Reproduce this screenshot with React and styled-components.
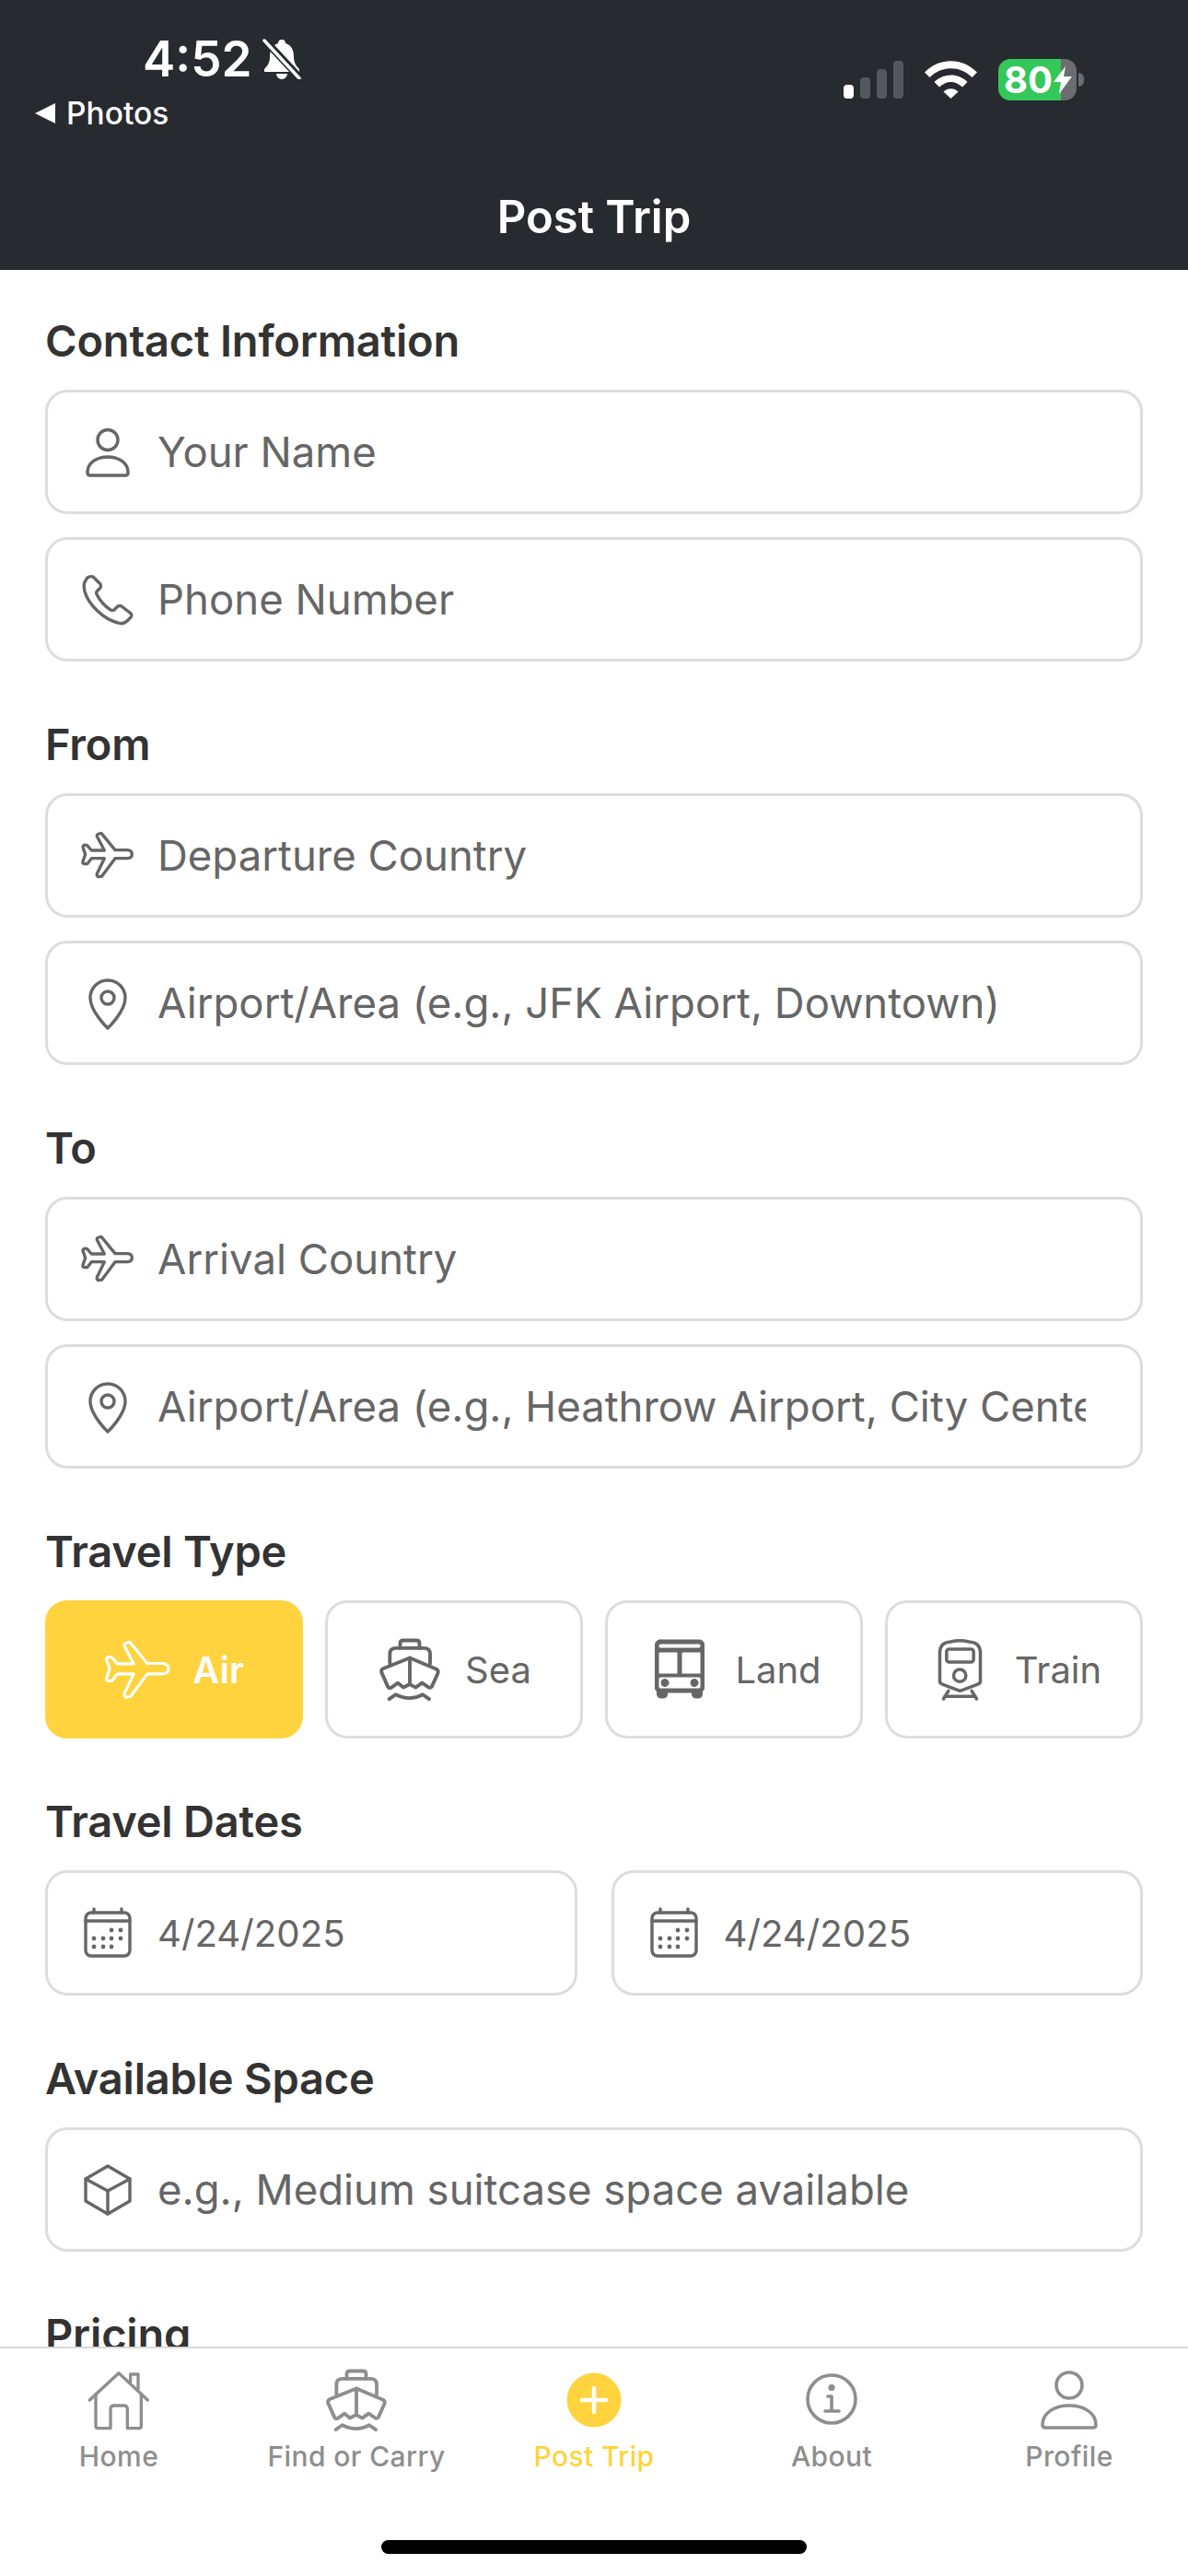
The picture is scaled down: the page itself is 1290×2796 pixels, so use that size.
import styled, { createGlobalStyle } from 'styled-components'

const GlobalStyle = createGlobalStyle`
    html, body {
        margin: 0;
        padding: 0;
        background: #ffffff;
        font-family: Inter, "Noto Sans", sans-serif;
    }
    * {
        box-sizing: border-box;
    }
`

const Screen = styled.div`
    width: 1290px;
    height: 2796px;
    display: flex;
    flex-direction: column;
    overflow: hidden;
    background: #ffffff;
`

const Header = styled.header`
    height: 293px;
    flex-shrink: 0;
    padding: 38px 113px 0 38px;
    background: #272a2f;
    color: #ffffff;
`

const StatusRow = styled.div`
    display: flex;
    justify-content: space-between;
    align-items: flex-start;
`

const TimeRow = styled.div`
    display: flex;
    align-items: center;
    gap: 10px;
    padding-left: 117px;
    height: 52px;
    font-size: 53px;
    font-weight: 600;
    line-height: 52px;
`

const BackLink = styled.div`
    display: flex;
    align-items: center;
    gap: 12px;
    margin-top: 16px;
    height: 34px;
    font-size: 33.5px;
    font-weight: 500;
`

const BackArrow = styled.span`
    width: 0;
    height: 0;
    border-top: 11px solid transparent;
    border-bottom: 11px solid transparent;
    border-right: 22px solid #ffffff;
`

const StatusIcons = styled.div`
    display: flex;
    align-items: center;
    gap: 23px;
    margin-top: 26px;
`

const Signal = styled.div`
    display: flex;
    align-items: flex-end;
    gap: 7px;
    height: 41px;
`

const SignalBar = styled.span`
    width: 11px;
    height: ${({ $height }) => $height}px;
    border-radius: 4px;
    background: ${({ $on }) => ($on ? '#ffffff' : '#54575b')};
`

const Battery = styled.div`
    display: flex;
    align-items: center;
    gap: 1px;
    width: 85px;
    height: 45px;
    padding-left: 6px;
    border-radius: 13px;
    background: linear-gradient(to right, #34c759 80%, #6b6d70 80%);
    font-size: 40px;
    font-weight: 700;
`

const BatteryWrap = styled.div`
    display: flex;
    align-items: center;
    gap: 2px;
`

const BatteryNub = styled.span`
    width: 6px;
    height: 15px;
    border-radius: 0 6px 6px 0;
    background: #6b6d70;
`

const Title = styled.h1`
    margin: 66px -75px 0 0;
    font-size: 49px;
    font-weight: 600;
    line-height: 60px;
    text-align: center;
`

const Form = styled.main`
    flex: 1;
    min-height: 0;
    padding: 50px 49px 0;
    overflow: hidden;
`

const Section = styled.section`
    margin-bottom: 63px;
`

const SectionLabel = styled.h2`
    margin: 0 0 26px;
    font-size: 47px;
    font-weight: 600;
    letter-spacing: -0.2px;
    line-height: 54px;
    color: #333333;
`

const FieldStack = styled.div`
    display: flex;
    flex-direction: column;
    gap: 25px;
`

const DateRow = styled.div`
    display: grid;
    grid-template-columns: repeat(2, 1fr);
    gap: 37px;
`

const Field = styled.div`
    display: flex;
    align-items: center;
    gap: 21px;
    height: ${({ $date }) => ($date ? '136px' : '135px')};
    padding: 0 59px 0 32px;
    border: 3px solid #dddddd;
    border-radius: 24px;
    overflow: hidden;
`

const FieldText = styled.span`
    flex: 1;
    min-width: 0;
    overflow: hidden;
    white-space: nowrap;
    font-size: ${({ $date }) => ($date ? '40.2px' : '45.5px')};
    color: #666666;
`

const TypeRow = styled.div`
    display: grid;
    grid-template-columns: repeat(4, 1fr);
    gap: 24px;
`

const TypeTile = styled.div`
    display: flex;
    align-items: center;
    justify-content: center;
    gap: 24px;
    height: 150px;
    border: 3px solid ${({ $active }) => ($active ? '#ffd33d' : '#dddddd')};
    border-radius: 24px;
    background: ${({ $active }) => ($active ? '#ffd33d' : '#ffffff')};
    color: ${({ $active }) => ($active ? '#ffffff' : '#666666')};
    font-size: 40px;
    font-weight: ${({ $active }) => ($active ? 600 : 400)};
`

const TabBar = styled.nav`
    flex-shrink: 0;
    display: flex;
    flex-direction: column;
    align-items: center;
    height: 249px;
    padding-top: 20px;
    border-top: 2px solid #d8d8d8;
    background: #ffffff;
`

const Tabs = styled.div`
    display: grid;
    grid-template-columns: repeat(5, 1fr);
    width: 100%;
`

const Tab = styled.div`
    display: flex;
    flex-direction: column;
    align-items: center;
    color: ${({ $active }) => ($active ? '#ffd33d' : '#8e8e8e')};
`

const TabLabel = styled.span`
    margin-top: 5px;
    font-size: 30px;
    font-weight: 500;
    letter-spacing: 0.4px;
    line-height: 40px;
`

const HomeIndicator = styled.div`
    width: 462px;
    height: 15px;
    margin-top: 71px;
    border-radius: 8px;
    background: #000000;
`

const Svg = styled.svg`
    display: block;
    flex-shrink: 0;
    fill: none;
    stroke: currentColor;
    stroke-linecap: round;
    stroke-linejoin: round;
`

const FieldIconBox = styled.span`
    display: flex;
    flex-shrink: 0;
    color: #666666;
`

const planePath = 'M82 48 L90 46 L135 101 L175 101 Q190 102 190 115 Q190 127 175 128 L135 128 L92 186 L80 188 Q74 184 76 178 L100 128 L58 128 L44 146 L34 146 Q28 144 30 138 L38 115 L30 92 Q30 86 36 84 L44 86 L58 102 L100 102 L76 56 Q74 50 82 48 Z'

const PlaneIcon = ({ size = 66, box = '12 21 198 198', stroke = 10 }) => (
    <Svg width={size} height={size} viewBox={box} strokeWidth={stroke}>
        <path d={planePath} />
    </Svg>
)

const UserIcon = () => (
    <Svg width="66" height="66" viewBox="0 0 66 66" strokeWidth="3.4">
        <circle cx="33" cy="19.5" r="11" />
        <path d="M11 55 C11 44 21 38 33 38 C45 38 55 44 55 55 Q55 58 52 58 H14 Q11 58 11 55 Z" />
    </Svg>
)

const PhoneIcon = () => (
    <Svg width="66" height="66" viewBox="0 0 66 66" strokeWidth="3.4">
        <path d="M17 8 Q14 7 11 9 L9 12 Q6 16 8 24 C12 38 28 54 44 58 Q50 60 54 56 L58 52 Q60 49 57 47 L48 40 Q46 39 44 40 L40 44 Q38 45 36 44 C30 40 24 33 21 27 Q20 25 22 23 L25 20 Q26 18 25 16 Z" />
    </Svg>
)

const PinIcon = () => (
    <Svg width="66" height="66" viewBox="0 0 66 66" strokeWidth="3.4">
        <path d="M33 60 C33 60 14 42 14 27 A19 19 0 0 1 52 27 C52 42 33 60 33 60 Z" />
        <circle cx="33" cy="27" r="7" />
    </Svg>
)

const CalendarIcon = () => (
    <Svg width="66" height="66" viewBox="0 0 66 66" strokeWidth="3.4">
        <rect x="9" y="11" width="48" height="47" rx="6" />
        <path d="M9 20 H57 M18 7 V11 M48 7 V11" />
        <g fill="currentColor" stroke="none">
            {[[37, 30], [47, 30], [18, 39], [28, 39], [37, 39], [47, 39], [18, 48], [28, 48], [37, 48]].map(([cx, cy]) => (
                <circle key={`${cx}-${cy}`} cx={cx} cy={cy} r="2.4" />
            ))}
        </g>
    </Svg>
)

const BoxIcon = () => (
    <Svg width="66" height="66" viewBox="0 0 66 66" strokeWidth="3.4">
        <path d="M33 7 L57 21 V45 L33 59 L9 45 V21 Z" />
        <path d="M9 21 L33 34 L57 21 M33 34 V59" />
    </Svg>
)

const ShipIcon = () => (
    <Svg width="72" height="72" viewBox="29 23 206 206" strokeWidth="11">
        <path d="M70 108 V78 Q70 60 90 60 H175 Q195 60 195 78 V108" />
        <path d="M102 60 V45 Q102 36 112 36 H152 Q162 36 162 45 V60" />
        <path d="M132 90 L215 125 Q222 130 219 138 L200 180 Q195 186 188 180 L170 168 L150 182 L132 172 L112 182 L95 168 L75 182 Q68 186 64 180 L44 135 Q42 128 48 124 Z" />
        <path d="M132 90 V172" />
        <path d="M68 218 L88 204 Q132 226 172 204 L192 218" />
    </Svg>
)

const BusIcon = () => (
    <Svg width="72" height="72" viewBox="0 0 72 72" stroke="none">
        <g fill="currentColor">
            <rect x="9.5" y="4" width="53" height="57" rx="5" />
            <rect x="11.5" y="56" width="11" height="11" rx="4" />
            <rect x="49.5" y="56" width="11" height="11" rx="4" />
        </g>
        <g fill="#ffffff">
            <rect x="13" y="8" width="46" height="5" rx="2" />
            <rect x="13" y="17" width="21" height="24" rx="1.5" />
            <rect x="38" y="17" width="21" height="24" rx="1.5" />
            <rect x="13" y="44" width="46" height="13" rx="2" />
        </g>
        <circle cx="20" cy="50.5" r="4" fill="currentColor" />
        <circle cx="52" cy="50.5" r="4" fill="currentColor" />
    </Svg>
)

const TrainIcon = () => (
    <Svg width="72" height="72" viewBox="16.5 18 216 216" strokeWidth="10.5">
        <path d="M60 72 Q60 38 95 36 Q125 28 155 36 Q192 38 192 72 V165 Q192 172 180 176 L126 196 L72 176 Q60 172 60 165 Z" />
        <rect x="82" y="60" width="88" height="42" rx="8" />
        <circle cx="125" cy="146" r="20" />
        <path d="M88 196 L72 222 M164 196 L180 222 M76 214 H176" />
    </Svg>
)

const HomeIcon = () => (
    <Svg width="72" height="72" viewBox="24 12 216 216" strokeWidth="10">
        <path d="M37 120 L132 32 L226 120" />
        <path d="M57 100 V205 Q57 212 64 212 H105 V150 Q105 138 117 138 H148 Q160 138 160 150 V212 H198 Q205 212 205 205 V100" />
        <path d="M170 60 V36 H195 V84" />
    </Svg>
)

const PostIcon = () => (
    <Svg width="72" height="72" viewBox="0 0 72 72" stroke="none">
        <circle cx="36" cy="36" r="29" fill="#ffd33d" />
        <path d="M36 23 V49 M23 36 H49" stroke="#ffffff" strokeWidth="4.5" />
    </Svg>
)

const InfoIcon = () => (
    <Svg width="72" height="72" viewBox="0 0 72 72" strokeWidth="3.6">
        <circle cx="36" cy="35" r="26" />
        <circle cx="36" cy="22.5" r="3.6" fill="currentColor" stroke="none" />
        <path d="M32 32 H36 V48 M29 48 H44" />
    </Svg>
)

const ProfileIcon = () => (
    <Svg width="72" height="72" viewBox="0 0 72 72" strokeWidth="3.6">
        <circle cx="36" cy="20" r="14" />
        <path d="M7 63 C7 50 20 42 36 42 C52 42 65 50 65 63 Q65 66 62 66 H10 Q7 66 7 63 Z" />
    </Svg>
)

const WifiIcon = () => (
    <svg width="57" height="41" viewBox="0 0 57 41" fill="#ffffff">
        <path d="M0 12.5 C16 -4 41 -4 57 12.5 L51.5 18 C38.5 5 18.5 5 5.5 18 Z" />
        <path d="M10.5 23 C20 13 37 13 46.5 23 L41 28.5 C33.5 21 23.5 21 16 28.5 Z" />
        <path d="M20.5 33.5 C25 29 32 29 36.5 33.5 L28.5 41 Z" />
    </svg>
)

const BellOffIcon = () => (
    <svg width="44" height="44" viewBox="0 0 44 44">
        <path d="M22 1 C25 1 26 3 26 5 C33 7 35 13 35 20 C35 26 38 30 41 33 V36 H3 V33 C6 30 9 26 9 20 C9 13 11 7 18 5 C18 3 19 1 22 1 Z M16 38 H28 C28 41 25 44 22 44 C19 44 16 41 16 38 Z" fill="#ffffff" />
        <path d="M3 1 L42 43" stroke="#272a2f" strokeWidth="8" />
        <path d="M3 2 L41 43" stroke="#ffffff" strokeWidth="3.5" strokeLinecap="round" />
    </svg>
)

const BoltIcon = () => (
    <svg width="20" height="30" viewBox="0 0 20 30" fill="#ffffff">
        <path d="M13 0 L0 17 H8 L6 30 L20 11 H11 Z" />
    </svg>
)

const iconFields = (icon, text) => ({ icon, text })

const sections = [
    {
        label: 'Contact Information',
        fields: [iconFields(<UserIcon />, 'Your Name'), iconFields(<PhoneIcon />, 'Phone Number')],
    },
    {
        label: 'From',
        fields: [iconFields(<PlaneIcon />, 'Departure Country'), iconFields(<PinIcon />, 'Airport/Area (e.g., JFK Airport, Downtown)')],
    },
    {
        label: 'To',
        fields: [iconFields(<PlaneIcon />, 'Arrival Country'), iconFields(<PinIcon />, 'Airport/Area (e.g., Heathrow Airport, City Center)')],
    },
]

const travelTypes = [
    { label: 'Air', icon: <PlaneIcon size={72} box="23.5 31 171 171" stroke={7.5} />, active: true },
    { label: 'Sea', icon: <ShipIcon /> },
    { label: 'Land', icon: <BusIcon /> },
    { label: 'Train', icon: <TrainIcon /> },
]

const tabs = [
    { label: 'Home', icon: <HomeIcon /> },
    { label: 'Find or Carry', icon: <ShipIcon /> },
    { label: 'Post Trip', icon: <PostIcon />, active: true },
    { label: 'About', icon: <InfoIcon /> },
    { label: 'Profile', icon: <ProfileIcon /> },
]

function App() {
    return (
        <Screen>
            <GlobalStyle />
            <Header>
                <StatusRow>
                    <div>
                        <TimeRow>
                            4:52
                            <BellOffIcon />
                        </TimeRow>
                        <BackLink>
                            <BackArrow />
                            Photos
                        </BackLink>
                    </div>
                    <StatusIcons>
                        <Signal>
                            <SignalBar $height={15} $on />
                            <SignalBar $height={23} />
                            <SignalBar $height={32} />
                            <SignalBar $height={41} />
                        </Signal>
                        <WifiIcon />
                        <BatteryWrap>
                            <Battery>
                                80
                                <BoltIcon />
                            </Battery>
                            <BatteryNub />
                        </BatteryWrap>
                    </StatusIcons>
                </StatusRow>
                <Title>Post Trip</Title>
            </Header>
            <Form>
                {sections.map((section) => (
                    <Section key={section.label}>
                        <SectionLabel>{section.label}</SectionLabel>
                        <FieldStack>
                            {section.fields.map((field) => (
                                <Field key={field.text}>
                                    <FieldIconBox>{field.icon}</FieldIconBox>
                                    <FieldText>{field.text}</FieldText>
                                </Field>
                            ))}
                        </FieldStack>
                    </Section>
                ))}
                <Section>
                    <SectionLabel>Travel Type</SectionLabel>
                    <TypeRow>
                        {travelTypes.map((type) => (
                            <TypeTile key={type.label} $active={type.active}>
                                {type.icon}
                                {type.label}
                            </TypeTile>
                        ))}
                    </TypeRow>
                </Section>
                <Section>
                    <SectionLabel>Travel Dates</SectionLabel>
                    <DateRow>
                        <Field $date>
                            <FieldIconBox><CalendarIcon /></FieldIconBox>
                            <FieldText $date>4/24/2025</FieldText>
                        </Field>
                        <Field $date>
                            <FieldIconBox><CalendarIcon /></FieldIconBox>
                            <FieldText $date>4/24/2025</FieldText>
                        </Field>
                    </DateRow>
                </Section>
                <Section>
                    <SectionLabel>Available Space</SectionLabel>
                    <Field>
                        <FieldIconBox><BoxIcon /></FieldIconBox>
                        <FieldText>e.g., Medium suitcase space available</FieldText>
                    </Field>
                </Section>
                <Section>
                    <SectionLabel>Pricing</SectionLabel>
                </Section>
            </Form>
            <TabBar>
                <Tabs>
                    {tabs.map((tab) => (
                        <Tab key={tab.label} $active={tab.active}>
                            {tab.icon}
                            <TabLabel>{tab.label}</TabLabel>
                        </Tab>
                    ))}
                </Tabs>
                <HomeIndicator />
            </TabBar>
        </Screen>
    )
}

export default App
